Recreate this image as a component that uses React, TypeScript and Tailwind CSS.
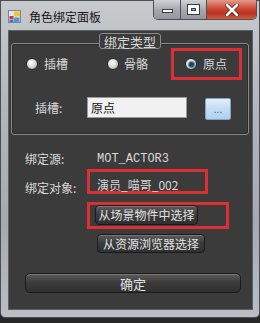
function Radio({ checked }: { checked?: boolean }) {
  return (
    <span className="flex h-[12px] w-[12px] shrink-0 items-center justify-center rounded-full border border-[#2e2e2e] bg-[radial-gradient(circle_at_40%_35%,#ffffff,#d4d4d4_55%,#8e8e8e)]">
      {checked && (
        <span className="h-[5px] w-[5px] rounded-full bg-[#1b4868] shadow-[0_0_0_1px_#5f93b8]" />
      )}
    </span>
  );
}

function DarkButton({ children, className }: { children: React.ReactNode; className: string }) {
  return (
    <button
      className={
        "flex items-center justify-center rounded-[4px] border border-[#1b1b1b] bg-[linear-gradient(180deg,#5c5c5c,#3d3d3d_45%,#2f2f2f)] text-[12px] leading-none text-[#e2e2e2] shadow-[inset_0_1px_0_rgba(255,255,255,0.18)] " +
        className
      }
    >
      {children}
    </button>
  );
}

function TitleIcon() {
  return (
    <svg width="13" height="13" viewBox="0 0 13 13">
      <rect x="0.5" y="0.5" width="12" height="12" fill="#dfe6ee" stroke="#7b8794" />
      <rect x="6" y="1.5" width="6" height="5" fill="#f2c23a" />
      <rect x="1.5" y="6" width="4" height="3" fill="#d9362b" />
      <rect x="1.5" y="9.5" width="4" height="2.5" fill="#3c6fc4" />
      <rect x="6" y="7.5" width="5.5" height="4.5" fill="#5b8fd8" />
    </svg>
  );
}

export default function App() {
  return (
    <div className="h-[323px] w-[260px] overflow-hidden bg-[#262626] font-['Noto_Sans_CJK_SC',sans-serif]">
      <div className="h-[318px] w-[260px] rounded-b-[5px] border border-[#4a4f55] bg-[linear-gradient(180deg,#c7cacd,#b4b8bc_30%,#a6aaaf_70%,#b9bec4)]">
        {/* title bar */}
        <div className="relative flex h-[29px] items-center pl-[7px] pt-[2px]">
          <TitleIcon />
          <span className="ml-[8px] text-[12px] leading-none text-[#151515]">角色绑定面板</span>
          <div className="absolute right-[2px] top-[-1px] flex h-[20px] overflow-hidden rounded-b-[5px] border border-t-0 border-[#4b5158]">
            <div className="flex w-[27px] items-center justify-center border-r border-[#4b5158] bg-[linear-gradient(180deg,#d0d3d6,#a6aaae_50%,#93979c)]">
              <span className="mt-[2px] h-[4px] w-[11px] border border-[#3a3e43] bg-white" />
            </div>
            <div className="flex w-[26px] items-center justify-center border-r border-[#4b5158] bg-[linear-gradient(180deg,#d0d3d6,#a6aaae_50%,#93979c)]">
              <span className="h-[9px] w-[11px] border-[3px] border-white shadow-[0_0_0_1px_#3a3e43,inset_0_0_0_1px_#3a3e43]" />
            </div>
            <div className="flex w-[49px] items-center justify-center bg-[linear-gradient(180deg,#e49a8c,#cc4b35_45%,#b8321f_70%,#d25a3f)]">
              <svg width="14" height="12" viewBox="0 0 14 12">
                <path d="M2 1 L12 11 M12 1 L2 11" stroke="#5a1a10" strokeWidth="4.2" strokeLinecap="round" />
                <path d="M2 1 L12 11 M12 1 L2 11" stroke="#ffffff" strokeWidth="2.6" strokeLinecap="round" />
              </svg>
            </div>
          </div>
        </div>

        {/* client area */}
        <div className="ml-[7px] h-[280px] w-[245px] border border-[#5b6066] bg-[#3b3b3b] text-[12px] leading-[16px] text-[#d8d8d8]">
          {/* group box */}
          <div className="relative ml-[2px] mt-[12px] h-[92px] w-[238px] rounded-[3px] border border-[#8a8a8a] shadow-[inset_0_0_0_1px_#2c2c2c]">
            <div className="absolute left-[87px] top-[-11px] flex h-[16px] w-[62px] items-center justify-center rounded-[3px] border border-[#8a8a8a] bg-[#3b3b3b] text-[13px] leading-none text-[#d8d8d8]">
              绑定类型
            </div>

            <div className="mt-[4px] flex h-[32px] items-center pl-[14px]">
              <div className="flex w-[81px] items-center gap-[6px]">
                <Radio />
                <span>插槽</span>
              </div>
              <div className="flex w-[64px] items-center gap-[5px]">
                <Radio />
                <span>骨骼</span>
              </div>
              <div className="flex h-[32px] w-[71px] items-center gap-[6px] border-[3px] border-[#dc2f33] pl-[11px]">
                <Radio checked />
                <span>原点</span>
              </div>
            </div>

            <div className="mt-[17px] flex h-[22px] items-start">
              <span className="ml-[23px] mt-[3px] w-[52px]">插槽:</span>
              <div className="flex h-[21px] w-[100px] items-center border border-[#9a9a9a] bg-[#f1f1f1] pl-[3px] text-[12px] text-[#111]">
                原点
              </div>
              <button className="ml-[18px] mt-[1px] flex h-[22px] w-[26px] items-center justify-center rounded-[2px] border border-[#7ea6cf] bg-[linear-gradient(180deg,#e3effa,#c3dcf3_50%,#b1d0ef)] text-[10px] leading-none text-[#3d6d9c]">
                ...
              </button>
            </div>
          </div>

          {/* binding info */}
          <div className="mt-[16px] flex h-[16px] pl-[16px]">
            <span className="w-[72px]">绑定源:</span>
            <span className="font-['Liberation_Mono',monospace] text-[12px]">MOT_ACTOR3</span>
          </div>

          <div className="mt-[2px] flex h-[25px] items-start pl-[16px]">
            <span className="w-[62px] pt-[11px]">绑定对象:</span>
            <div className="h-[25px] w-[121px] border-[3px] border-[#dc2f33] pl-[7px] pt-[5px]">
              演员_喵哥_002
            </div>
          </div>

          <div className="ml-[78px] mt-[8px] h-[27px] w-[142px] border-[3px] border-[#dc2f33] pl-[5px]">
            <DarkButton className="h-[20px] w-[103px]">从场景物件中选择</DarkButton>
          </div>

          <DarkButton className="ml-[88px] mt-[5px] h-[19px] w-[108px]">从资源浏览器选择</DarkButton>

          <DarkButton className="ml-[16px] mt-[20px] h-[20px] w-[216px] rounded-[5px] text-[13px]">确定</DarkButton>
        </div>
      </div>
    </div>
  );
}
